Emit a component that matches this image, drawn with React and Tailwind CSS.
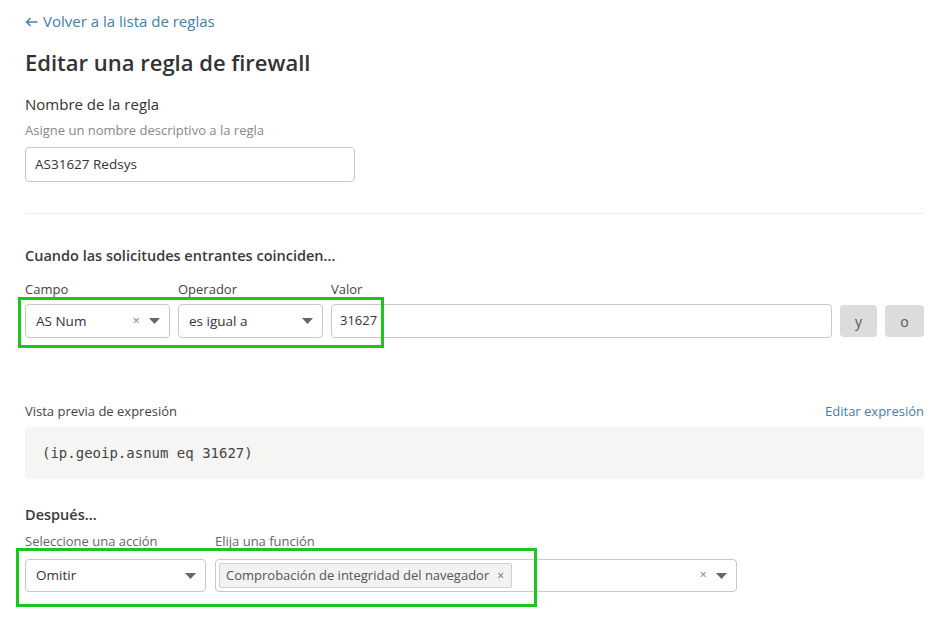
import React from "react";

const Caret = () => (
  <svg width="11" height="6" viewBox="0 0 11 6" className="shrink-0">
    <path d="M0 0 L11 0 L5.5 6 Z" fill="#666" />
  </svg>
);

const Clear = () => <span className="text-[13px] text-[#888] leading-none">×</span>;

export default function App() {
  return (
    <div
      className="relative w-[950px] h-[626px] overflow-hidden bg-white text-[#333] pl-[25px] pr-[26px] pt-[11px]"
      style={{ fontFamily: '"Open Sans", "Noto Sans", sans-serif' }}
    >
      <a className="flex items-center gap-[5px] text-[15px] leading-[20px] text-[#4380ad]">
        <svg width="13" height="10" viewBox="0 0 13 10" className="mt-[1px]">
          <path d="M12.5 5 H1.5 M5.5 1 L1.5 5 L5.5 9" fill="none" stroke="#4380ad" strokeWidth="1.4" />
        </svg>
        <span>Volver a la lista de reglas</span>
      </a>

      <h1 className="mt-[17px] text-[22px] leading-[28px] font-semibold text-[#333]">
        Editar una regla de firewall
      </h1>

      <div className="mt-[18px] text-[15px] leading-[20px] text-[#333]">Nombre de la regla</div>
      <div className="mt-[7px] text-[13px] leading-[18px] text-[#888]">Asigne un nombre descriptivo a la regla</div>
      <div className="mt-[8px] w-[330px] h-[35px] border border-[#c8c8c8] rounded-[4px] flex items-center px-[9px] text-[13.5px] text-[#333]">
        AS31627 Redsys
      </div>

      <div className="mt-[31px] h-px bg-[#eeeeee]" />

      <div className="mt-[32px] text-[14.5px] leading-[20px] font-semibold text-[#3a3a3a]">
        Cuando las solicitudes entrantes coinciden...
      </div>

      <div className="mt-[14px] flex gap-[8px] text-[13px] leading-[18px] text-[#444]">
        <div className="w-[145px]">Campo</div>
        <div className="w-[145px]">Operador</div>
        <div>Valor</div>
      </div>
      <div className="mt-[6px] flex gap-[8px] items-center">
        <div className="w-[145px] h-[34px] border border-[#c8c8c8] rounded-[4px] flex items-center pl-[10px] pr-[9px] text-[13.5px]">
          <span className="flex-1">AS Num</span>
          <span className="mr-[9px] mt-[-2px]"><Clear /></span>
          <Caret />
        </div>
        <div className="w-[145px] h-[34px] border border-[#c8c8c8] rounded-[4px] flex items-center pl-[10px] pr-[9px] text-[13.5px]">
          <span className="flex-1">es igual a</span>
          <Caret />
        </div>
        <div className="flex-1 h-[34px] border border-[#c8c8c8] rounded-[4px] flex items-center pl-[8px] text-[13px]">
          31627
        </div>
        <div className="w-[37px] h-[32px] rounded-[4px] bg-[#dcdcdc] flex items-center justify-center text-[14px] text-[#555]">y</div>
        <div className="w-[39px] h-[32px] rounded-[4px] bg-[#dcdcdc] flex items-center justify-center text-[14px] text-[#555]">o</div>
      </div>

      <div className="mt-[64px] flex justify-between text-[13px] leading-[18px]">
        <span className="text-[#444]">Vista previa de expresión</span>
        <span className="text-[#4380ad]">Editar expresión</span>
      </div>
      <div
        className="mt-[7px] h-[52px] rounded-[4px] bg-[#f5f5f4] flex items-center pl-[17px] text-[14px] text-[#444]"
        style={{ fontFamily: '"DejaVu Sans Mono", "Liberation Mono", monospace' }}
      >
        (ip.geoip.asnum eq 31627)
      </div>

      <div className="mt-[26px] text-[14.5px] leading-[20px] font-semibold text-[#3a3a3a]">Después...</div>
      <div className="mt-[7px] flex gap-[9px] text-[13px] leading-[18px] text-[#666]">
        <div className="w-[181px]">Seleccione una acción</div>
        <div>Elija una función</div>
      </div>
      <div className="mt-[9px] flex gap-[9px] items-center">
        <div className="w-[181px] h-[33px] border border-[#c8c8c8] rounded-[4px] flex items-center pl-[10px] pr-[9px] text-[13.5px]">
          <span className="flex-1">Omitir</span>
          <Caret />
        </div>
        <div className="w-[522px] h-[33px] border border-[#c8c8c8] rounded-[4px] flex items-center pl-[3px] pr-[9px] text-[13.5px]">
          <div className="h-[25px] w-[293px] shrink-0 whitespace-nowrap bg-[#f2f2f2] border border-[#d0d0d0] rounded-[2px] flex items-center pl-[6px] text-[13px] text-[#555]">
            <span>Comprobación de integridad del navegador</span>
            <span className="ml-[8px] text-[12px] text-[#666]">×</span>
          </div>
          <span className="flex-1" />
          <span className="mr-[9px] mt-[-2px]"><Clear /></span>
          <Caret />
        </div>
      </div>

      <div className="absolute left-[18px] top-[297px] w-[366px] h-[51px] border-[3px] border-[#1ec51e] pointer-events-none" />
      <div className="absolute left-[16px] top-[548px] w-[521px] h-[59px] border-[3px] border-[#1ec51e] pointer-events-none" />
    </div>
  );
}
